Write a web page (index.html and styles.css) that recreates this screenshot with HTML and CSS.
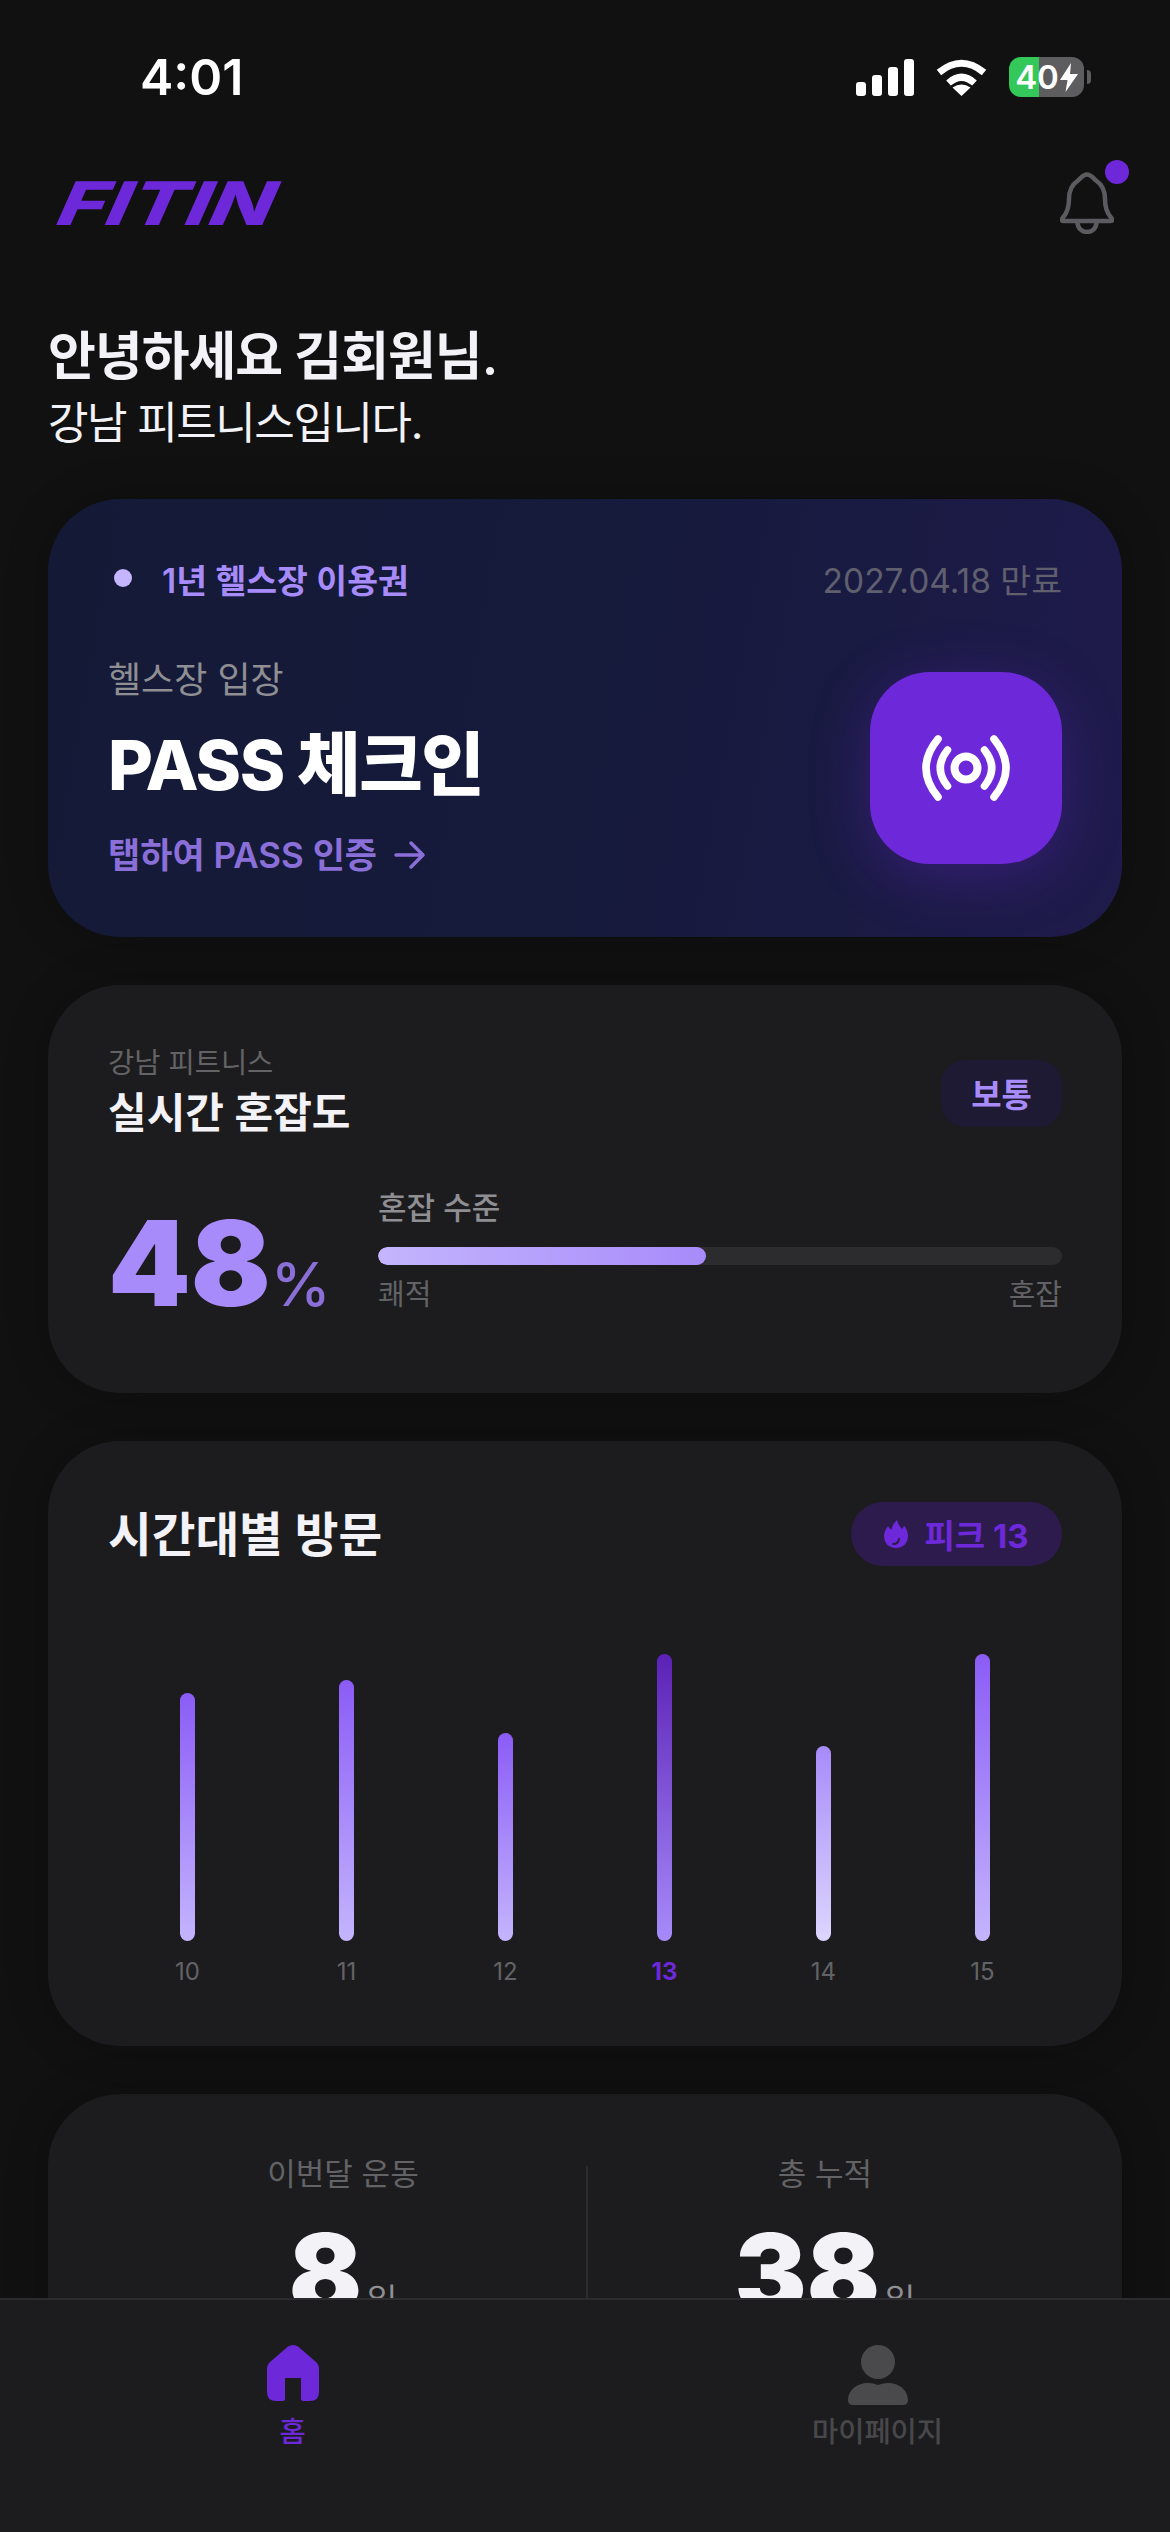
FILE: index.html
```html
<!DOCTYPE html>
<html lang="ko">
<head>
    <meta charset="UTF-8">
    <meta name="viewport" content="width=device-width, initial-scale=1.0">
    <title>FITIN - 홈</title>
    <link rel="stylesheet" href="styles.css">
</head>
<body>
    <div class="app">
        <div class="status-bar">
            <div class="status-time">4:01</div>
            <div class="status-icons">
                <div class="signal">
                    <span class="signal-bar signal-1"></span>
                    <span class="signal-bar signal-2"></span>
                    <span class="signal-bar signal-3"></span>
                    <span class="signal-bar signal-4"></span>
                </div>
                <svg class="wifi" width="51" height="37" viewBox="0 0 51 37">
                    <path d="M3 13.5Q25.5 -5 48 13.5" fill="none" stroke="#fff" stroke-width="7"/>
                    <path d="M12.500 24Q25.500 12.500 38.500 24" fill="none" stroke="#fff" stroke-width="7"/>
                    <path d="M25.500 37L16.500 28.500Q25.500 22.500 34.500 28.500Z" fill="#fff"/>
                </svg>
                <div class="battery-wrap">
                    <div class="battery">
                        <span>40</span>
                        <svg width="18" height="29" viewBox="0 0 18 29">
                            <path d="M11 0L0 17H7.500L5.500 29L18 11H10Z" fill="#fff"/>
                        </svg>
                    </div>
                    <span class="battery-tip"></span>
                </div>
            </div>
        </div>

        <div class="scroll">
            <div class="top-bar">
                <div class="logo"><span class="logo-text">FITIN</span></div>
                <div class="bell">
                    <svg width="54" height="62" viewBox="0 0 54 62" fill="none" stroke="#5c5c60" stroke-width="4.500" stroke-linejoin="round">
                        <path d="M27 2.500C31 2.500 33 6 36 8.500C42 12.500 45 19 45 27C45 36 47 41 51 45.500Q54 49 50 49H4Q0 49 3 45.500C7 41 9 36 9 27C9 19 12 12.500 18 8.500C21 6 23 2.500 27 2.500Z"/>
                        <path d="M17.500 50C17.500 56 21.500 60 27 60C32.500 60 36.500 56 36.500 50"/>
                    </svg>
                    <span class="bell-dot"></span>
                </div>
            </div>

            <div class="greeting">
                <div class="greeting-name">안녕하세요 김회원님.</div>
                <div class="greeting-gym">강남 피트니스입니다.</div>
            </div>

            <div class="cards">
                <div class="card pass-card">
                    <div class="pass-top">
                        <div class="pass-ticket">
                            <span class="pass-dot"></span>
                            <span>1년 헬스장 이용권</span>
                        </div>
                        <div class="pass-expire">2027.04.18 만료</div>
                    </div>
                    <div class="pass-body">
                        <div class="pass-info">
                            <div class="pass-label">헬스장 입장</div>
                            <div class="pass-title">PASS 체크인</div>
                            <div class="pass-link">
                                <span>탭하여 PASS 인증</span>
                                <svg width="34" height="30" viewBox="0 0 34 30" fill="none" stroke="#8b6fd8" stroke-width="3.500" stroke-linecap="round" stroke-linejoin="round">
                                    <path d="M3 15H30M18 3L30 15L18 27"/>
                                </svg>
                            </div>
                        </div>
                        <div class="pass-btn">
                            <svg width="96" height="96" viewBox="-48 -48 96 96" fill="none" stroke="#fff" stroke-linecap="round">
                                <circle cx="0" cy="0" r="11.500" stroke-width="8"/>
                                <path d="M-18.500 -18Q-33 0 -18.500 18M18.500 -18Q33 0 18.500 18" stroke-width="7.500"/>
                                <path d="M-28 -29Q-52 0 -28 29M28 -29Q52 0 28 29" stroke-width="7.500"/>
                            </svg>
                        </div>
                    </div>
                </div>

                <div class="card crowd-card">
                    <div class="card-head">
                        <div>
                            <div class="crowd-gym">강남 피트니스</div>
                            <div class="crowd-title">실시간 혼잡도</div>
                        </div>
                        <div class="crowd-badge">보통</div>
                    </div>
                    <div class="crowd-body">
                        <div class="crowd-num">48<span class="crowd-unit">%</span></div>
                        <div class="crowd-level">
                            <div class="crowd-level-label">혼잡 수준</div>
                            <div class="crowd-track">
                                <div class="crowd-fill" style="width: 48%"></div>
                            </div>
                            <div class="crowd-scale">
                                <span>쾌적</span>
                                <span>혼잡</span>
                            </div>
                        </div>
                    </div>
                </div>

                <div class="card visit-card">
                    <div class="card-head">
                        <div class="visit-title">시간대별 방문</div>
                        <div class="peak-pill">
                            <svg width="24" height="28" viewBox="0 0 24 28">
                                <path d="M13 0C14 4 16 7 18 9C19 8 19.500 7 20 5.500C23 9 24 13 24 16C24 23 19 28 12 28C5 28 0 23 0 16C0 12 2 9 4 6C5 8 6 9 7.500 9.500C8 6 10 3 13 0Z" fill="#6d28d9"/>
                                <path d="M9 24C12 24 14.500 22.500 15 19" fill="none" stroke="#2d1b4e" stroke-width="2" stroke-linecap="round"/>
                            </svg>
                            <span>피크 13</span>
                        </div>
                    </div>
                    <div class="chart">
                        <div class="chart-col">
                            <div class="chart-bar" style="height: 248px"></div>
                            <div class="chart-label">10</div>
                        </div>
                        <div class="chart-col">
                            <div class="chart-bar" style="height: 261px"></div>
                            <div class="chart-label">11</div>
                        </div>
                        <div class="chart-col">
                            <div class="chart-bar" style="height: 208px"></div>
                            <div class="chart-label">12</div>
                        </div>
                        <div class="chart-col">
                            <div class="chart-bar chart-bar-peak" style="height: 287px"></div>
                            <div class="chart-label chart-label-peak">13</div>
                        </div>
                        <div class="chart-col">
                            <div class="chart-bar chart-bar-low" style="height: 195px"></div>
                            <div class="chart-label">14</div>
                        </div>
                        <div class="chart-col">
                            <div class="chart-bar" style="height: 287px"></div>
                            <div class="chart-label">15</div>
                        </div>
                    </div>
                </div>

                <div class="card stats-card">
                    <div class="stat">
                        <div class="stat-label">이번달 운동</div>
                        <div class="stat-num">8<span class="stat-unit">일</span></div>
                    </div>
                    <div class="stat-divider"></div>
                    <div class="stat">
                        <div class="stat-label">총 누적</div>
                        <div class="stat-num">38<span class="stat-unit">일</span></div>
                    </div>
                </div>
            </div>
        </div>

        <div class="tab-bar">
            <div class="tab tab-active">
                <div class="tab-icon">
                    <svg width="52" height="56" viewBox="0 0 52 56">
                        <path d="M21 1.500Q26 -1.500 31 1.500L49 17Q52 19.500 52 24V47Q52 56 43 56H36Q34 56 34 54V33H18V54Q18 56 16 56H9Q0 56 0 47V24Q0 19.500 3 17Z" fill="#6d28d9"/>
                    </svg>
                </div>
                <div class="tab-label">홈</div>
            </div>
            <div class="tab">
                <div class="tab-icon">
                    <svg width="60" height="60" viewBox="0 0 60 60" fill="#4a4a4d">
                        <circle cx="30" cy="17" r="17"/>
                        <path d="M5 60Q0 60 0 55C0 45 9 38 20 38Q25 38 30 40Q35 38 40 38C51 38 60 45 60 55Q60 60 55 60Z"/>
                    </svg>
                </div>
                <div class="tab-label">마이페이지</div>
            </div>
        </div>
    </div>
</body>
</html>
```

FILE: styles.css
```css
* {
    box-sizing: border-box;
}

body {
    margin: 0;
    padding: 0;
    background-color: #111112;
    font-family: 'Inter', 'Noto Sans CJK KR', sans-serif;
    color: #f2f2f7;
}

.app {
    width: 1170px;
    height: 2532px;
    display: flex;
    flex-direction: column;
    overflow: hidden;
    background-color: #111112;
}

/* status bar */
.status-bar {
    flex: none;
    height: 154px;
    padding: 0 79px 0 140px;
    display: flex;
    justify-content: space-between;
    align-items: center;
}

.status-time {
    font-size: 50px;
    font-weight: 600;
    color: #fff;
}

.status-icons {
    display: flex;
    align-items: center;
    gap: 22px;
}

.signal {
    display: flex;
    align-items: flex-end;
    gap: 6px;
    height: 37px;
}

.signal-bar {
    width: 10px;
    background-color: #fff;
    border-radius: 3px;
}

.signal-1 { height: 14px; }
.signal-2 { height: 21px; }
.signal-3 { height: 29px; }
.signal-4 { height: 37px; }

.battery-wrap {
    display: flex;
    align-items: center;
    gap: 3px;
}

.battery {
    width: 75px;
    height: 40px;
    border-radius: 12px;
    background-image: linear-gradient(to right, #34c759 40%, #5d5d60 40%);
    display: flex;
    justify-content: center;
    align-items: center;
    gap: 1px;
    font-size: 33px;
    font-weight: 600;
    color: #fff;
}

.battery-tip {
    width: 4px;
    height: 14px;
    background-color: #5d5d60;
    border-radius: 0 4px 4px 0;
}

/* scrolling content */
.scroll {
    flex: 1;
    min-height: 0;
    overflow: hidden;
    padding: 0 48px;
}

.top-bar {
    height: 84px;
    margin-top: 7px;
    display: flex;
    justify-content: space-between;
    align-items: center;
    padding: 0 8px 0 9px;
}

.logo {
    width: 223px;
    height: 44px;
    display: flex;
    align-items: center;
    justify-content: center;
    overflow: visible;
}

.logo-text {
    font-size: 60px;
    font-weight: 800;
    line-height: 44px;
    color: #6d28d9;
    transform: skewX(-24deg) scaleX(1.38);
}

.bell {
    position: relative;
    width: 54px;
    height: 62px;
}

.bell-dot {
    position: absolute;
    top: -12px;
    right: -15px;
    width: 24px;
    height: 24px;
    border-radius: 50%;
    background-color: #6d28d9;
}

.greeting {
    margin-top: 78px;
}

.greeting-name {
    font-size: 52px;
    line-height: 67px;
    font-weight: 600;
    letter-spacing: -1px;
    color: #f2f2f7;
}

.greeting-gym {
    font-size: 44px;
    line-height: 67px;
    font-weight: 400;
    letter-spacing: -1.4px;
    color: #f2f2f7;
}

.cards {
    margin-top: 42px;
    display: flex;
    flex-direction: column;
    gap: 48px;
}

.card {
    background-color: #1c1c1e;
    border-radius: 72px;
    box-shadow: 0 0 40px rgba(0, 0, 0, 0.25);
}

.card-head {
    display: flex;
    justify-content: space-between;
    align-items: center;
}

/* pass */
.pass-card {
    height: 438px;
    padding: 59px 60px 58px;
    background-image: linear-gradient(100deg, #141a36 0%, #161a3c 55%, #1f1b4c 100%);
}

.pass-top {
    display: flex;
    justify-content: space-between;
    align-items: center;
    height: 40px;
    font-size: 33.500px;
}

.pass-ticket {
    display: flex;
    align-items: center;
    gap: 30px;
    font-weight: 600;
    color: #a78bfa;
}

.pass-dot {
    width: 18px;
    height: 18px;
    margin-left: 6px;
    border-radius: 50%;
    background-color: #c4b5fd;
}

.pass-expire {
    color: #5f5f6e;
}

.pass-body {
    margin-top: 58px;
    display: flex;
    justify-content: space-between;
    align-items: center;
}

.pass-label {
    font-size: 36px;
    line-height: 48px;
    color: #8e8e93;
}

.pass-title {
    margin-top: 19px;
    font-size: 69px;
    line-height: 84px;
    font-weight: 800;
    letter-spacing: -1.500px;
    color: #fff;
}

.pass-link {
    margin-top: 24px;
    display: flex;
    align-items: center;
    gap: 16px;
    font-size: 35px;
    line-height: 48px;
    font-weight: 600;
    color: #8b6fd8;
}

.pass-btn {
    width: 192px;
    height: 192px;
    border-radius: 60px;
    background-color: #6d28d9;
    box-shadow: 0 12px 60px rgba(109, 40, 217, 0.32);
    display: flex;
    justify-content: center;
    align-items: center;
}

/* crowd */
.crowd-card {
    height: 408px;
    padding: 58px 60px;
}

.crowd-gym {
    font-size: 28.500px;
    line-height: 40px;
    color: #636366;
}

.crowd-title {
    font-size: 42px;
    line-height: 60px;
    font-weight: 600;
    color: #f2f2f7;
}

.crowd-badge {
    width: 121px;
    height: 67px;
    border-radius: 24px;
    background-color: #1e1a33;
    display: flex;
    justify-content: center;
    align-items: center;
    font-size: 33px;
    font-weight: 700;
    color: #a78bfa;
}

.crowd-body {
    margin-top: 43px;
    display: flex;
    align-items: flex-start;
}

.crowd-num {
    flex: none;
    width: 270px;
    padding-top: 17px;
    font-size: 118px;
    line-height: 120px;
    font-weight: 900;
    color: #a78bfa;
}

.crowd-unit {
    margin-left: 0;
    font-size: 60px;
    font-weight: 500;
    color: #8b6fd8;
}

.crowd-level {
    flex: 1;
}

.crowd-level-label {
    font-size: 31px;
    line-height: 44px;
    font-weight: 500;
    color: #8e8e93;
}

.crowd-track {
    margin-top: 17px;
    height: 18px;
    border-radius: 9px;
    background-color: #2c2c2e;
    overflow: hidden;
}

.crowd-fill {
    height: 100%;
    border-radius: 9px;
    background-image: linear-gradient(to right, #c4b5fd, #a78bfa);
}

.crowd-scale {
    margin-top: 12px;
    display: flex;
    justify-content: space-between;
    font-size: 29px;
    line-height: 36px;
    color: #636366;
}

/* visits */
.visit-card {
    height: 605px;
    padding: 61px 60px 55px;
}

.visit-title {
    font-size: 47.500px;
    line-height: 63px;
    font-weight: 600;
    color: #f2f2f7;
}

.peak-pill {
    width: 211px;
    height: 64px;
    border-radius: 32px;
    background-color: #2d1b4e;
    display: flex;
    justify-content: center;
    align-items: center;
    gap: 16px;
    font-size: 33px;
    font-weight: 700;
    color: #6d28d9;
}

.chart {
    margin-top: 88px;
    display: grid;
    grid-template-columns: repeat(6, 1fr);
    align-items: end;
}

.chart-col {
    display: flex;
    flex-direction: column;
    align-items: center;
}

.chart-bar {
    width: 15px;
    border-radius: 8px;
    background-image: linear-gradient(to bottom, #8b5cf6, #c4b5fd);
}

.chart-bar-peak {
    background-image: linear-gradient(to bottom, #5b21b6, #a78bfa);
}

.chart-bar-low {
    background-image: linear-gradient(to bottom, #a78bfa, #ddd6fe);
}

.chart-label {
    margin-top: 13px;
    font-size: 24px;
    line-height: 36px;
    color: #636366;
}

.chart-label-peak {
    font-weight: 700;
    color: #6d28d9;
}

/* stats */
.stats-card {
    height: 400px;
    padding: 58px 60px 58px 52px;
    display: grid;
    grid-template-columns: 486px 2px 1fr;
}

.stat {
    text-align: center;
}

.stat-label {
    font-size: 31px;
    line-height: 44px;
    color: #636366;
}

.stat-num {
    margin-top: 23px;
    font-size: 108px;
    line-height: 108px;
    font-weight: 900;
    color: #f2f2f7;
}

.stat-unit {
    margin-left: 5px;
    font-size: 33px;
    font-weight: 400;
    color: #8e8e93;
}

.stat-divider {
    margin-top: 14px;
    height: 240px;
    background-color: #2c2c2e;
}

/* tab bar */
.tab-bar {
    flex: none;
    height: 234px;
    padding-top: 45px;
    background-color: #1c1c1e;
    border-top: 2px solid #2c2c2e;
    display: flex;
}

.tab {
    flex: 1;
    display: flex;
    flex-direction: column;
    align-items: center;
    color: #48484a;
}

.tab-active {
    color: #6d28d9;
}

.tab-icon {
    height: 60px;
}

.tab-icon svg {
    display: block;
}

.tab-label {
    margin-top: 5px;
    font-size: 28.500px;
    line-height: 44px;
    font-weight: 500;
}
```
